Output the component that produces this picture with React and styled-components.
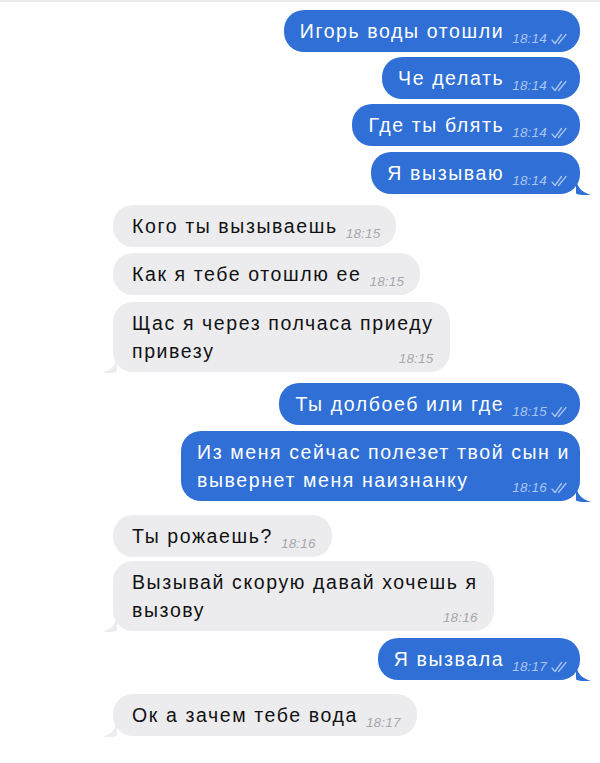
import React from 'react';
import styled, { createGlobalStyle } from 'styled-components';

const GlobalStyle = createGlobalStyle`
  html, body {
    margin: 0;
    padding: 0;
    background: #ffffff;
  }
  body {
    font-family: "Liberation Sans", Arial, sans-serif;
    -webkit-font-smoothing: antialiased;
  }
`;

const Page = styled.div`
  width: 600px;
  min-height: 763px;
  background: #fff;
  border-top: 2px solid #ebebed;
  box-sizing: border-box;
`;

const Chat = styled.div`
  display: flex;
  flex-direction: column;
  padding: 8px 20px 0 113px;
`;

const Row = styled.div`
  display: flex;
  justify-content: ${(p) => (p.out ? 'flex-end' : 'flex-start')};
  margin-top: ${(p) => p.gap}px;
`;

const Bubble = styled.div`
  position: relative;
  box-sizing: border-box;
  padding: ${(p) => (p.out ? '7px 10px 7px 16px' : '7px 16px 7px 19px')};
  border-radius: 20px;
  background: ${(p) => (p.out ? '#2f6fd6' : '#ececef')};
  color: ${(p) => (p.out ? '#ffffff' : '#121212')};
  font-size: 19.5px;
  line-height: 28px;
  letter-spacing: 1.6px;

  &::after {
    content: '';
    display: block;
    clear: both;
  }
`;

const Meta = styled.span`
  float: right;
  display: inline-flex;
  align-items: center;
  gap: 3px;
  margin: 8px 0 -8px 8px;
  height: 28px;
  font-size: 13.5px;
  font-style: italic;
  letter-spacing: 0.2px;
  color: ${(p) => (p.out ? '#a9c5f1' : '#a7a7ae')};
`;

const Tail = styled.svg`
  position: absolute;
  bottom: -1px;
  width: 15px;
  height: 17px;
  ${(p) => (p.out ? 'right: -11px;' : 'left: -11px; transform: scaleX(-1);')}
`;

const Checks = () => (
  <svg width="20" height="12" viewBox="0 0 20 12">
    <path
      d="M2 7 L5 10.5 L11.5 1.5 M8.5 10.5 L16 1.5"
      fill="none"
      stroke="#a9c5f1"
      strokeWidth="1.3"
      strokeLinecap="round"
      strokeLinejoin="round"
    />
  </svg>
);

const messages = [
  { out: true, gap: 0, lines: ['Игорь воды отошли'], time: '18:14' },
  { out: true, gap: 5, lines: ['Че делать'], time: '18:14' },
  { out: true, gap: 5, lines: ['Где ты блять'], time: '18:14' },
  { out: true, gap: 6, lines: ['Я вызываю'], time: '18:14', tail: true },
  { out: false, gap: 11, lines: ['Кого ты вызываешь'], time: '18:15' },
  { out: false, gap: 6, lines: ['Как я тебе отошлю ее'], time: '18:15' },
  { out: false, gap: 7, lines: ['Щас я через полчаса приеду', 'привезу'], time: '18:15', tail: true },
  { out: true, gap: 11, lines: ['Ты долбоеб или где'], time: '18:15' },
  { out: true, gap: 6, lines: ['Из меня сейчас полезет твой сын и', 'вывернет меня наизнанку'], time: '18:16', tail: true },
  { out: false, gap: 14, lines: ['Ты рожаешь?'], time: '18:16' },
  { out: false, gap: 4, lines: ['Вызывай скорую давай хочешь я', 'вызову'], time: '18:16', tail: true },
  { out: true, gap: 7, lines: ['Я вызвала'], time: '18:17', tail: true },
  { out: false, gap: 14, lines: ['Ок а зачем тебе вода'], time: '18:17', tail: true },
];

function Message({ out, gap, lines, time, tail }) {
  return (
    <Row out={out} gap={gap}>
      <Bubble out={out}>
        {lines.map((line, i) => (
          <React.Fragment key={i}>
            {i > 0 && <br />}
            {line}
          </React.Fragment>
        ))}
        <Meta out={out}>
          {time}
          {out && <Checks />}
        </Meta>
        {tail && (
          <Tail out={out} viewBox="0 0 15 17">
            <path
              d="M0 0 C1 9 5 14 15 17 C8 17.5 3 17 0 15.5 Z"
              fill={out ? '#2f6fd6' : '#ececef'}
            />
          </Tail>
        )}
      </Bubble>
    </Row>
  );
}

export default function App() {
  return (
    <Page>
      <GlobalStyle />
      <Chat>
        {messages.map((m, i) => (
          <Message key={i} {...m} />
        ))}
      </Chat>
    </Page>
  );
}
